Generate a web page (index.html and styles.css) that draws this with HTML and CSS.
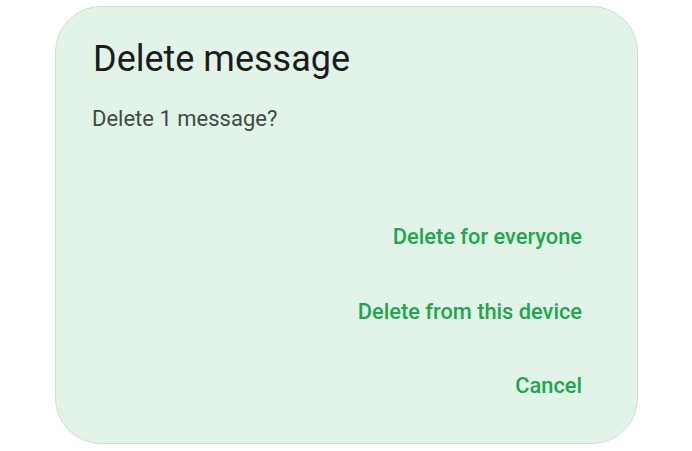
FILE: index.html
```html
<!DOCTYPE html>
<html>
<head>
<meta charset="utf-8">
<link rel="stylesheet" href="styles.css">
</head>
<body>
<div class="dialog">
  <h1 class="title">Delete message</h1>
  <p class="body">Delete 1 message?</p>
  <div class="actions">
    <button class="action">Delete for everyone</button>
    <button class="action">Delete from this device</button>
    <button class="action">Cancel</button>
  </div>
</div>
</body>
</html>
```
FILE: styles.css
```css
html, body {
  margin: 0;
  padding: 0;
  background: #ffffff;
}
body {
  font-family: Roboto, "Noto Sans", sans-serif;
  padding: 6px 0 0 55px;
}
.dialog {
  box-sizing: border-box;
  width: 583px;
  height: 438px;
  background: #e2f4e8;
  border: 1px solid #d6d9d7;
  border-radius: 46px;
  padding: 30px 55px 0 36px;
  display: flex;
  flex-direction: column;
}
.title {
  margin: 0 0 0 1px;
  font-size: 36px;
  font-weight: 400;
  line-height: 44px;
  color: #1b1c1b;
}
.body {
  margin: 24px 0 0;
  font-size: 22px;
  line-height: 28px;
  color: #434844;
}
.actions {
  margin-top: 90px;
  display: flex;
  flex-direction: column;
  align-items: flex-end;
  gap: 46.5px;
}
.action {
  border: none;
  background: none;
  padding: 0;
  font-family: Roboto, "Noto Sans", sans-serif;
  font-weight: 500;
  font-size: 21.8px;
  line-height: 28px;
  color: #1ca74d;
}
```
